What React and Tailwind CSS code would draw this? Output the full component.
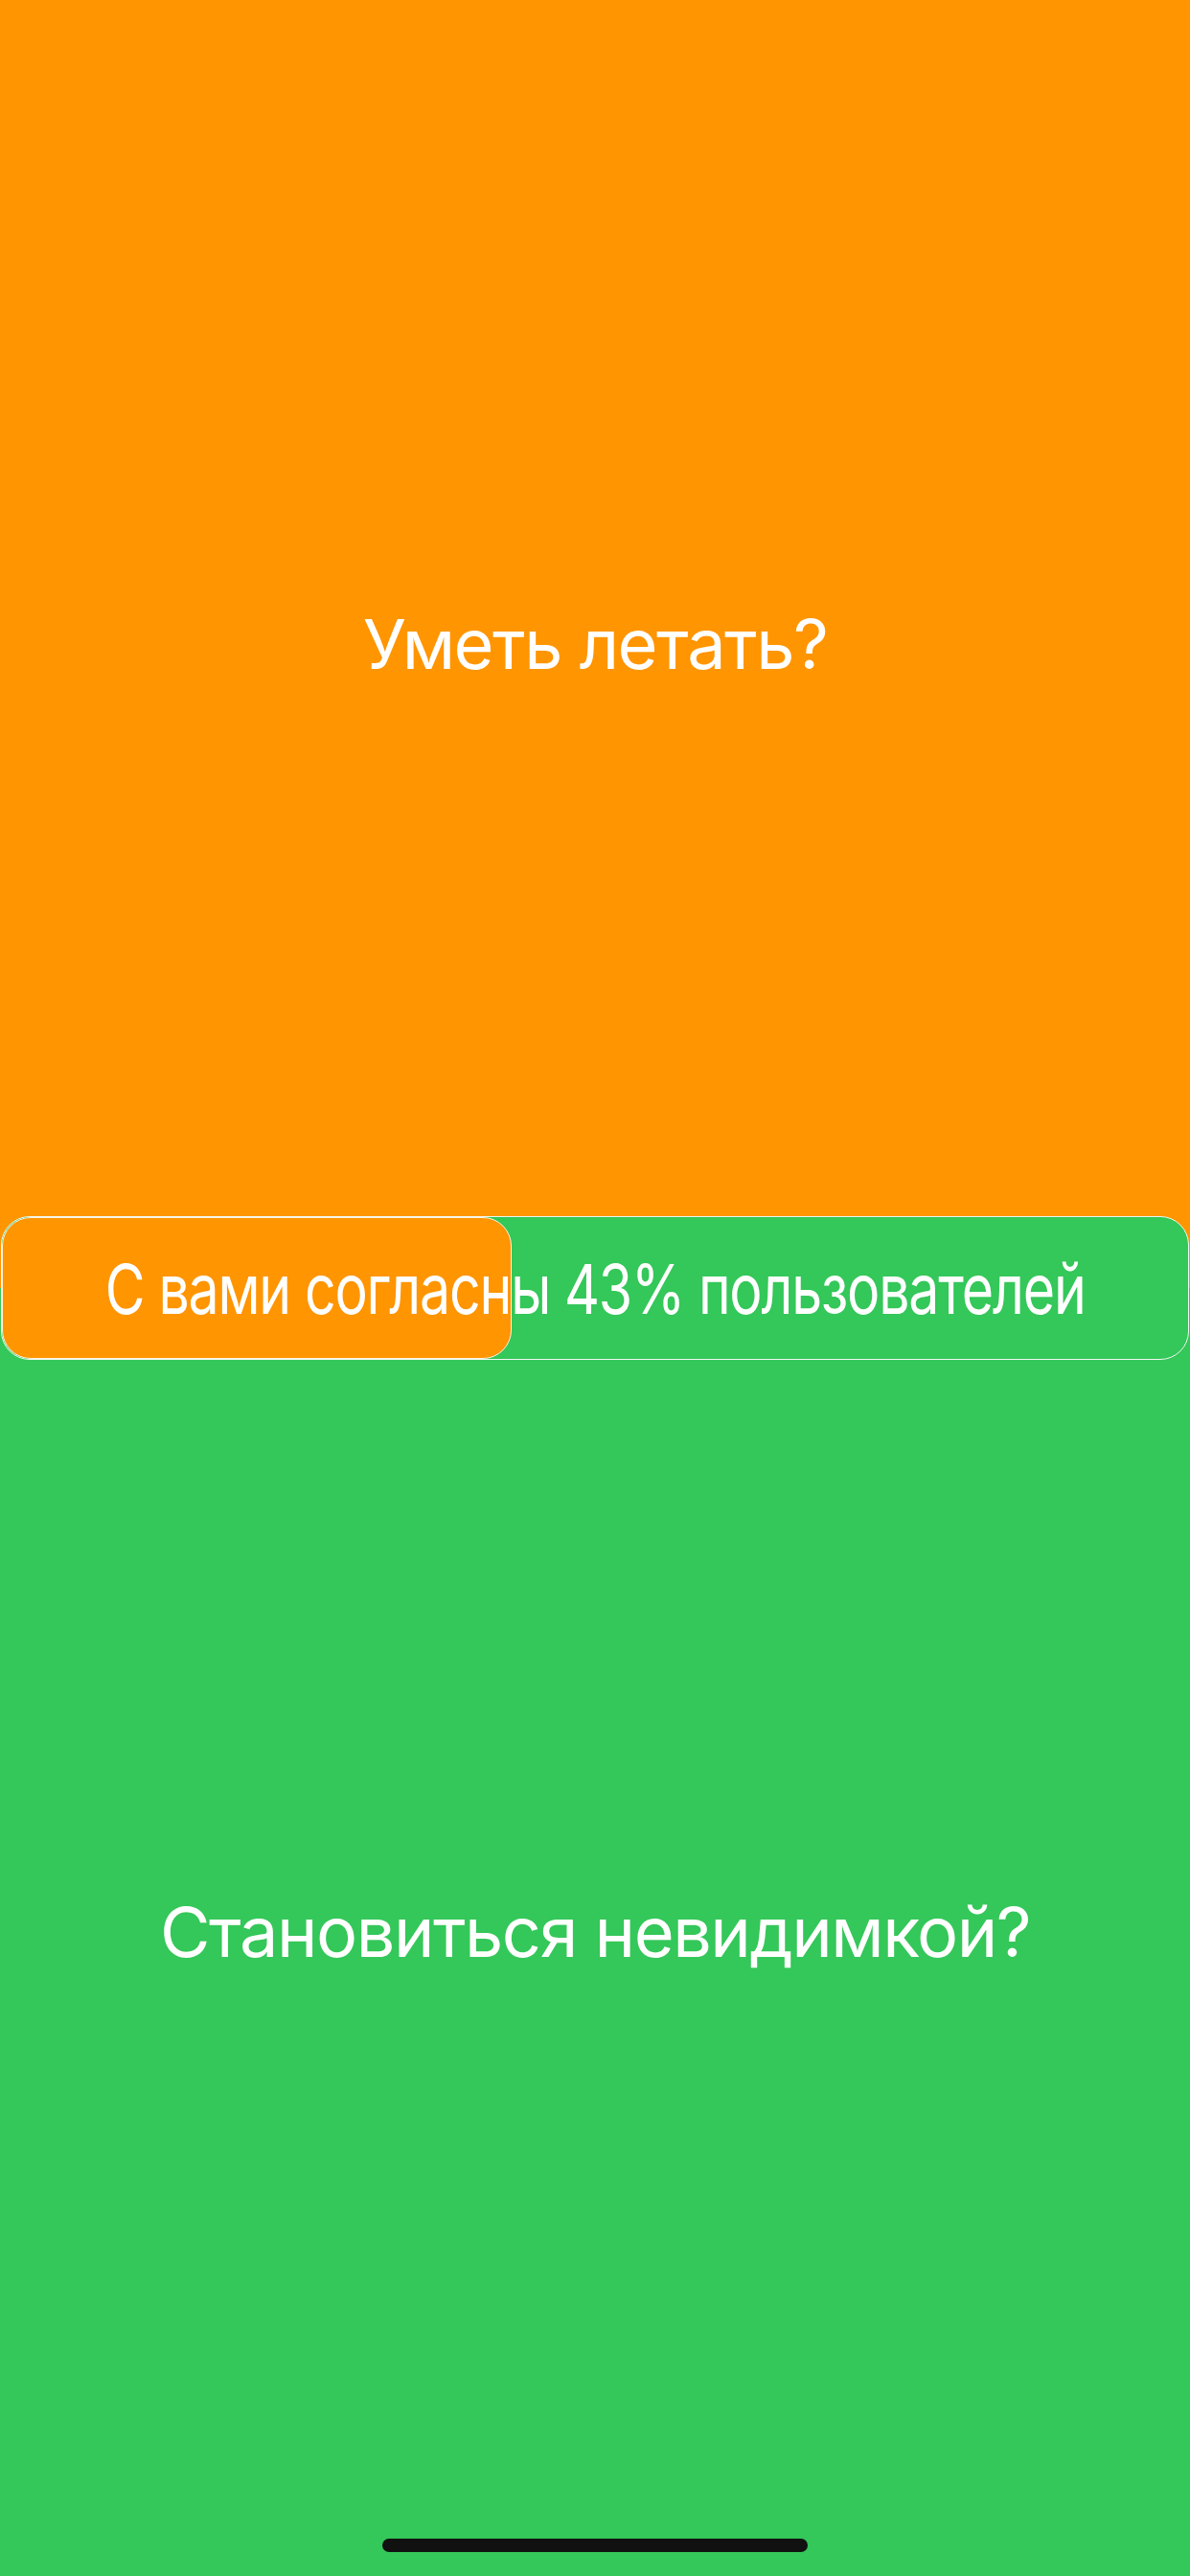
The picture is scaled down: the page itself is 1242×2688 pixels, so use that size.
export default function App() {
  const percent = 43;

  return (
    <div
      className="relative w-[1242px] h-[2688px] overflow-hidden text-white"
      style={{ fontFamily: 'Inter, "Noto Sans", sans-serif' }}
    >
      <div className="flex flex-col h-full">
        <div className="flex-1 bg-[#ff9500] flex items-center justify-center">
          <p className="text-[72px] leading-none tracking-[-1.5px]">Уметь летать?</p>
        </div>
        <div className="flex-1 bg-[#34c759] flex items-center justify-center">
          <p className="text-[72px] leading-none tracking-[-1.5px]">Становиться невидимкой?</p>
        </div>
      </div>

      {/* result bar sits over the seam between the two answers */}
      <div className="absolute left-[1px] right-[1px] top-[1269px] h-[150px] rounded-[30px] border border-[#eef8f1] bg-[#34c759] overflow-hidden">
        <div
          className="absolute left-0 top-0 bottom-0 rounded-[30px] border border-[#fff4e2] bg-[#ff9500]"
          style={{ width: `${percent}%` }}
        />
        <div className="relative h-full flex items-center justify-center pt-[2px]">
          <p className="text-[72px] leading-none tracking-[-1.5px] whitespace-nowrap scale-x-[0.795]">
            С вами согласны {percent}% пользователей
          </p>
        </div>
      </div>

      <div className="absolute left-[399px] bottom-[25px] w-[444px] h-[14px] rounded-full bg-[#111111]" />
    </div>
  );
}
